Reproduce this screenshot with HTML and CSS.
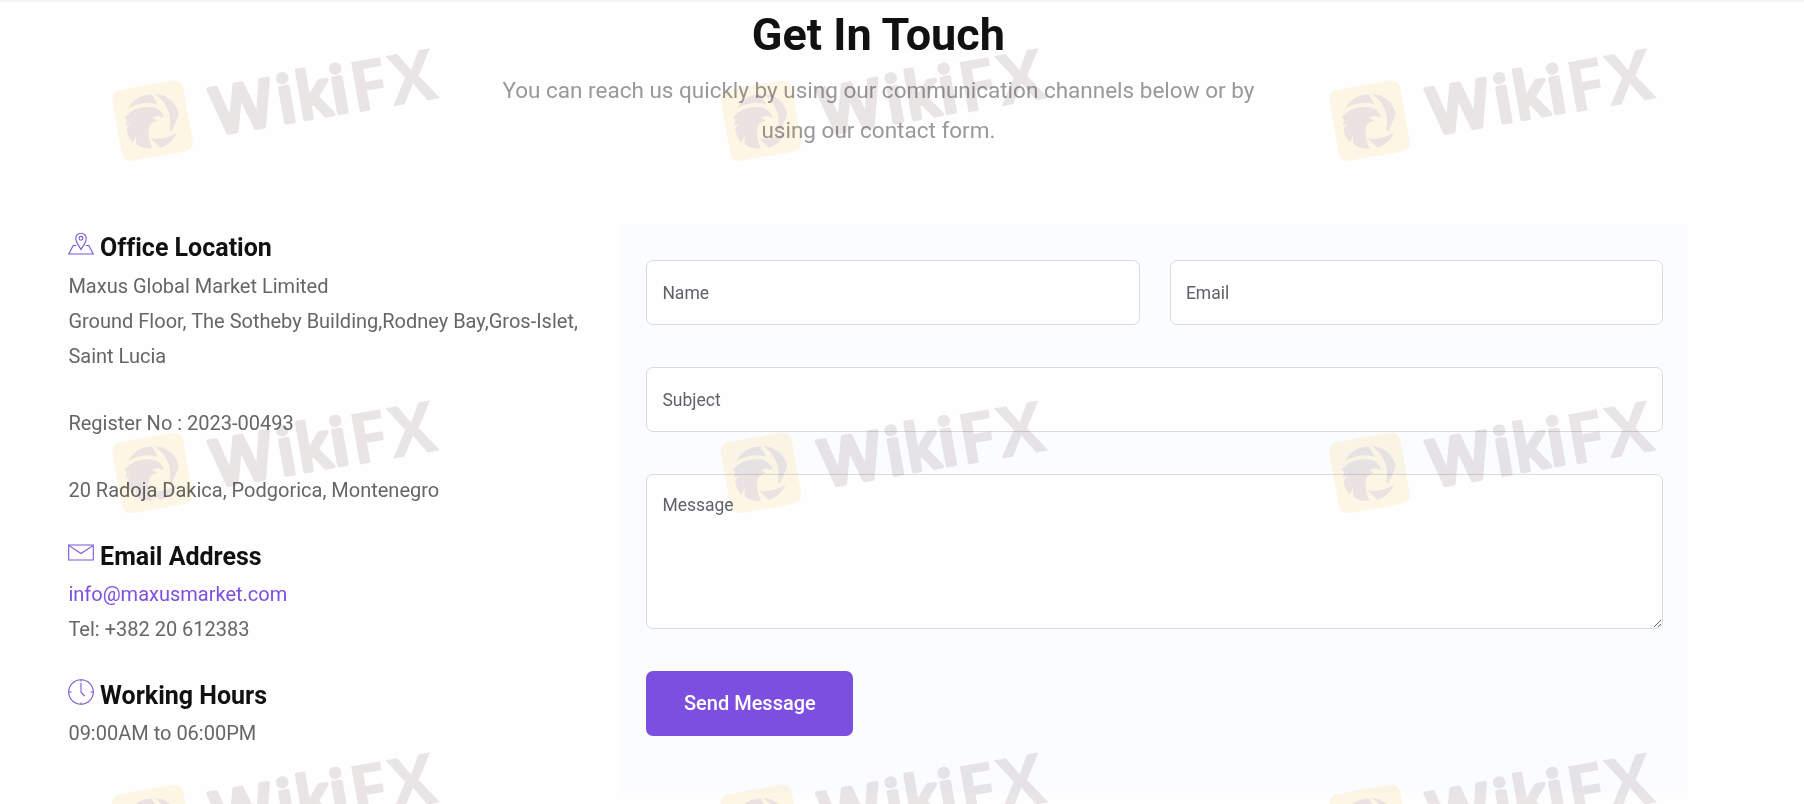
FILE: index.html
```html
<!DOCTYPE html>
<html lang="en">
<head>
    <meta charset="UTF-8">
    <meta name="viewport" content="width=device-width, initial-scale=1.0">
    <title>Get In Touch</title>
    <link rel="stylesheet" href="styles.css">
</head>
<body>

<section class="contact">
    <div class="section-title">
        <h2>Get In Touch</h2>
        <p>You can reach us quickly by using our communication channels below or by using our contact form.</p>
    </div>

    <div class="contact-row">
        <!-- Contact details -->
        <div class="contact-info">
            <div class="info-item">
                <h4>
                    <svg class="icon" viewBox="0 0 26 26"><path d="M8.300 14.500H5.200L.8 23h24.400l-4.400-8.500h-3.100"/><path d="M13 18.600C11 14.500 7.800 11.600 7.800 7.400a5.200 5.200 0 0 1 10.400 0c0 4.200-3.200 7.100-5.200 11.200z"/><circle cx="13" cy="7.300" r="1.900"/></svg>
                    Office Location
                </h4>
                <p>Maxus Global Market Limited<br>Ground Floor, The Sotheby Building,Rodney Bay,Gros-Islet,<br>Saint Lucia</p>
                <p>Register No : 2023-00493</p>
                <p>20 Radoja Dakica, Podgorica, Montenegro</p>
            </div>

            <div class="info-item">
                <h4>
                    <svg class="icon" viewBox="0 0 26 26"><path d="M.7 5h24.600v15H.7z"/><path d="M.7 5.400L13 13.500l12.300-8.100"/></svg>
                    Email Address
                </h4>
                <p><a href="mailto:info@maxusmarket.com">info@maxusmarket.com</a><br>Tel: +382 20 612383</p>
            </div>

            <div class="info-item">
                <h4>
                    <svg class="icon" viewBox="0 0 26 26"><circle cx="13" cy="13" r="12.300"/><path d="M13 4v9.200l3.700 3.800M13 .7v1.800M13 23.500v1.800M.7 13h2.800M22.500 13h2.800"/></svg>
                    Working Hours
                </h4>
                <p>09:00AM to 06:00PM</p>
            </div>
        </div>

        <!-- Contact form -->
        <form class="contact-form">
            <div class="form-row">
                <input type="text" name="name" placeholder="Name">
                <input type="email" name="email" placeholder="Email">
            </div>
            <input type="text" name="subject" placeholder="Subject">
            <textarea name="message" placeholder="Message"></textarea>
            <button type="button">Send Message</button>
        </form>
    </div>
</section>

<!-- Watermark -->
<svg class="watermark" width="1804" height="804">
    <defs>
        <g id="mark" transform="rotate(-10)">
            <rect class="mark-box" x="-36" y="-36" width="72" height="72" rx="9"/>
            <g class="mark-bird">
                <path d="M-22-16C-15-25-5-28 4-26l4 11C-1-20-11-20-22-16z"/>
                <path d="M7-26C18-24 27-14 27-2L17 14l-2-2C21-3 17-16 7-26z"/>
                <path d="M-5 17c9 3 18 2 27-1C17 23 11 27 3 28z"/>
                <path d="M-27-8C-19-15-8-17 2-13c5 1 9 5 10 12L6-4l-6 1 5 4c-4 0-7 1-9 4-3 6-3 13-1 22-7 0-12-3-15-7l1-8-4 6c-3-5-4-9-4-14l4-5-4 1 2-6z"/>
            </g>
            <g class="mark-text">
                <g class="round">
                    <text x="60 126 180" y="25">Wii</text>
                    <text x="146" y="25" textLength="34" lengthAdjust="spacingAndGlyphs">k</text>
                </g>
                <text x="199.500 239.500" y="27.500">FX</text>
            </g>
        </g>
    </defs>
    <use href="#mark" transform="translate(152.500 120.700)"/>
    <use href="#mark" transform="translate(761 120.700)"/>
    <use href="#mark" transform="translate(1369.500 120.700)"/>
    <use href="#mark" transform="translate(152.500 473)"/>
    <use href="#mark" transform="translate(761 473)"/>
    <use href="#mark" transform="translate(1369.500 473)"/>
    <use href="#mark" transform="translate(152.500 825)"/>
    <use href="#mark" transform="translate(761 825)"/>
    <use href="#mark" transform="translate(1369.500 825)"/>
</svg>

</body>
</html>
```
FILE: styles.css
```css
* {
    box-sizing: border-box;
}

body {
    font-family: Roboto, Arial, sans-serif;
    font-variant-ligatures: none;
    background-color: #fefefe;
    color: #666;
    margin: 0;
    height: 804px;
    overflow: hidden;
    border-top: 2px solid #f5f5f5;
}

h2, h4, p {
    margin: 0;
}

.contact {
    width: 1620px;
    margin-left: 68.4px;
    padding-top: 6px;
}

.section-title {
    width: 800px;
    margin: 0 auto;
    text-align: center;
}

.section-title h2 {
    font-size: 45px;
    line-height: 54px;
    color: #111;
}

.section-title p {
    margin-top: 8px;
    font-size: 22.5px;
    line-height: 40px;
    color: #999;
}

.contact-row {
    display: flex;
    margin-top: 74px;
}

.contact-info {
    width: 553px;
    padding-top: 6px;
}

.info-item {
    margin-bottom: 31px;
}

.info-item h4 {
    font-size: 25px;
    line-height: 36px;
    color: #111;
    margin-bottom: 2px;
}

.info-item:first-child h4 {
    margin-bottom: 3px;
}

.info-item p {
    font-size: 20px;
    line-height: 35px;
}

.info-item p + p {
    margin-top: 32px;
}

.info-item a {
    color: #7c4fe0;
    text-decoration: none;
}

.icon {
    width: 26px;
    height: 26px;
    margin-right: -0.5px;
    vertical-align: -1px;
    fill: none;
    stroke: #7d55d4;
    stroke-width: 1.1;
}

.contact-form {
    display: flex;
    flex-direction: column;
    gap: 42px;
    flex: 1;
    height: 569px;
    padding: 36px 25px 0;
    background-color: #fafcfe;
}

.form-row {
    display: flex;
    gap: 30px;
}

.contact-form input, .contact-form textarea {
    display: block;
    width: 100%;
    height: 65px;
    padding: 0 15px;
    border: 1px solid #d8dbe0;
    border-radius: 7px;
    background-color: #fefefe;
    font-family: inherit;
    font-size: 17.5px;
}

.contact-form textarea {
    height: 155px;
    padding-top: 18px;
    line-height: 24px;
    resize: vertical;
}

.contact-form ::placeholder {
    color: #5f6368;
}

.contact-form button {
    width: 207px;
    height: 65px;
    padding-bottom: 3px;
    border: none;
    border-radius: 7px;
    background-color: #7c4fe0;
    color: #fff;
    font-family: inherit;
    font-size: 20px;
    font-weight: 500;
    cursor: pointer;
}

.watermark {
    position: absolute;
    top: 0;
    left: 0;
    pointer-events: none;
}

.mark-box {
    fill: #fef7e5;
}

.mark-bird {
    fill: #ebe4e3;
}

.mark-text {
    font-family: "Open Sans", sans-serif;
    font-weight: 700;
    font-size: 71px;
    fill: #eae6e6;
}

.mark-text .round {
    font-size: 65px;
    font-weight: 600;
    stroke: #eae6e6;
    stroke-width: 4;
    stroke-linejoin: round;
}

.watermark use {
    mix-blend-mode: multiply;
}
```
